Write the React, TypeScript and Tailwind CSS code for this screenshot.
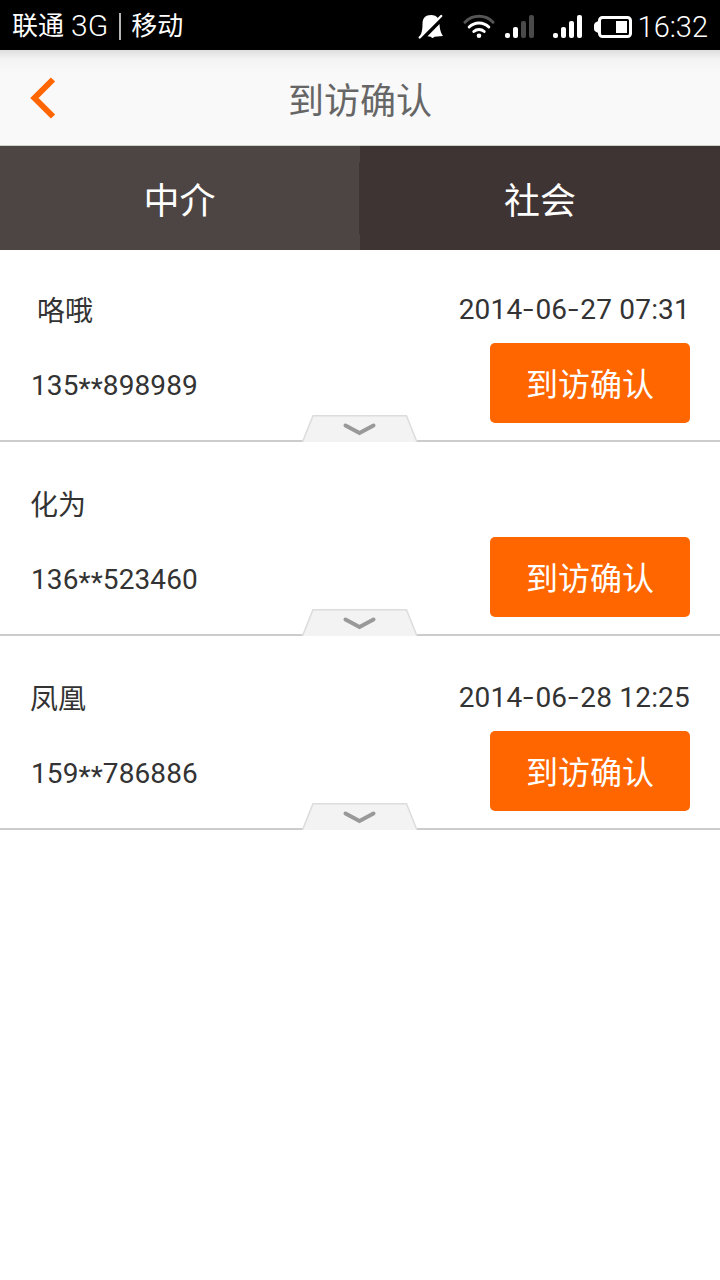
import { Fragment } from "react";

const visits = [
  { id: 1, name: "咯哦", phone: "135**898989", date: "2014-06-27 07:31", indent: true },
  { id: 2, name: "化为", phone: "136**523460", date: "", indent: false },
  { id: 3, name: "凤凰", phone: "159**786886", date: "2014-06-28 12:25", indent: false },
];

const BellOff = () => (
  <svg width="26" height="26" viewBox="0 0 26 26">
    <path d="M1 24C3.500 19.500 4.500 17 4.500 10 4.500 4 7.500 1 13 1c3 0 5.500.800 7.500 4z" fill="#fff" />
    <path d="M21.500 10c.300 5.500 1.200 8.500 3.500 12l-8.500.800c-.800 1.500-3 1.500-3.800 0L9.500 22.300z" fill="#fff" />
    <path d="M1.700 23.500 23.200 2" stroke="#fff" strokeWidth="2.400" strokeLinecap="round" />
  </svg>
);

const Wifi = () => (
  <svg width="32" height="25" viewBox="0 0 32 25" fill="none" strokeWidth="3" strokeLinecap="round">
    <path d="M2 8.200a19.500 19.500 0 0 1 28 0" stroke="#555" />
    <path d="M6.200 13a13.800 13.800 0 0 1 19.600 0" stroke="#fff" />
    <path d="M10.800 17.500a7.600 7.600 0 0 1 10.400 0" stroke="#fff" />
    <circle cx="16" cy="21.700" r="2.300" fill="#fff" />
  </svg>
);

const Signal = ({ level }: { level: number }) => (
  <svg width="30" height="24" viewBox="0 0 30 24">
    {[5, 11, 17, 23].map((h, i) => (
      <rect
        key={h}
        x={i * 8}
        y={23 - h}
        width="5"
        height={h}
        rx="2"
        fill={i < level ? "#fff" : "#4a4a4a"}
      />
    ))}
  </svg>
);

const Battery = () => (
  <svg width="38" height="22" viewBox="0 0 38 22">
    <rect x="5.500" y="1.500" width="31" height="19" rx="3" fill="none" stroke="#fff" strokeWidth="3" />
    <path d="M5 4.500v13L1.500 15.500Q0 14.500 0 13V9Q0 7.500 1.500 6.500z" fill="#fff" />
    <rect x="22" y="5" width="11" height="12" fill="#fff" />
  </svg>
);

const VisitDate = ({ value }: { value: string }) => (
  <span className="pt-[2px] text-[28px] leading-8 tracking-[0.2px] whitespace-pre">
    {value.split("-").map((part, i) => (
      <Fragment key={i}>
        {i > 0 && (
          <span className="inline-block w-[13px] -translate-y-px scale-x-135 text-center">-</span>
        )}
        {part}
      </Fragment>
    ))}
  </span>
);

const Phone = ({ value }: { value: string }) => {
  const [head, tail] = value.split("**");
  return (
    <span className="pt-[5px] pl-px text-[28px] leading-8 tracking-[0.1px]">
      {head}
      <span className="relative top-[3px]">**</span>
      {tail}
    </span>
  );
};

const App = () => {
  return (
    <div className="flex h-[1280px] w-[720px] flex-col overflow-hidden bg-white font-['Roboto','Noto_Sans_CJK_SC',sans-serif]">
      <div className="flex h-[50px] shrink-0 items-center bg-black pr-3 pl-3 text-white">
        <div className="flex items-center pt-[2px] text-[26px] leading-[48px]">
          <span>联通</span>
          <span className="ml-[7px] text-[30px] font-light">3G</span>
          <span className="mr-[10px] ml-[11px] h-[27px] w-[2px] bg-[#b5b5b5]" />
          <span>移动</span>
        </div>
        <div className="ml-auto flex items-center pt-[3px]">
          <BellOff />
          <span className="ml-[19px]">
            <Wifi />
          </span>
          <span className="ml-[10px]">
            <Signal level={2} />
          </span>
          <span className="ml-[18px]">
            <Signal level={4} />
          </span>
          <span className="ml-[11px]">
            <Battery />
          </span>
          <span className="ml-[6px] pt-[2px] text-[29px] leading-[45px] font-light">16:32</span>
        </div>
      </div>

      <header className="grid h-24 shrink-0 grid-cols-[120px_1fr_120px] items-center border-b border-[#cdd2c8] bg-[#f9f9f9] bg-linear-to-b from-[#dedede] via-[#f4f4f4] via-10% to-[#f9f9f9] to-25%">
        <button className="pl-[30px]">
          <svg width="26" height="42" viewBox="0 0 26 42" fill="none">
            <path d="M23 2.500 4.500 21 23 39.500" stroke="#ff6600" strokeWidth="6" />
          </svg>
        </button>
        <h1 className="pt-[9px] text-center text-[36px] leading-[52px] text-[#666]">到访确认</h1>
      </header>

      <nav className="grid h-[104px] shrink-0 grid-cols-2 text-[36px] text-white">
        <button className="flex items-center bg-[#4d4444]">
          <span className="grow pt-[7px]">中介</span>
          <span className="h-[72px] w-px bg-[#3f3535]" />
        </button>
        <button className="bg-[#3e3434] pt-[7px]">社会</button>
      </nav>

      <ul className="flex flex-col text-[#333]">
        {visits.map((visit) => (
          <li
            key={visit.id}
            className="relative flex h-[194px] flex-col justify-end border-b-2 border-[#ccc] px-[30px] pb-[17px] first:h-[192px]"
          >
            <div className="flex h-8 items-center justify-between">
              <span
                className={
                  visit.indent
                    ? "pt-[5px] pl-[7px] text-[28px] leading-8"
                    : "pt-[5px] text-[28px] leading-8"
                }
              >
                {visit.name}
              </span>
              <VisitDate value={visit.date} />
            </div>
            <div className="mt-[18px] flex h-20 items-center justify-between">
              <Phone value={visit.phone} />
              <button className="h-20 w-[200px] rounded-[5px] bg-[#ff6600] pt-[4px] text-[32px] text-white">
                到访确认
              </button>
            </div>
            <svg
              className="absolute -bottom-[2px] left-[302px]"
              width="116"
              height="27"
              viewBox="0 0 116 27"
              fill="none"
            >
              <path d="M0 27 10.500.500h94L115 27z" fill="#f3f3f3" />
              <path d="M.5 27 11 .800h93.500L115 27" stroke="#dcdcdc" strokeWidth="1.500" />
              <path d="M43.500 10.500 57.500 18l14-7.500" stroke="#999" strokeWidth="4" strokeLinecap="round" />
            </svg>
          </li>
        ))}
      </ul>
    </div>
  );
};

export default App;
